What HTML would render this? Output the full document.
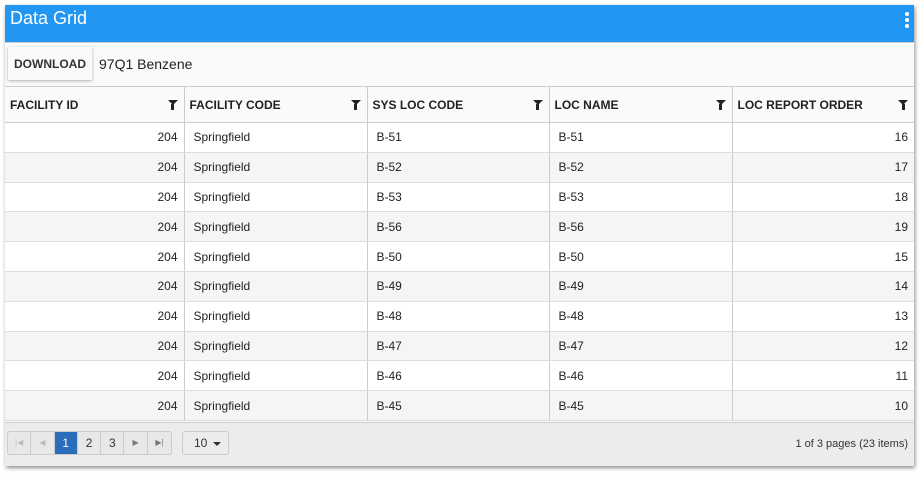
<!DOCTYPE html>
<html><head><style>
*{box-sizing:border-box;margin:0;padding:0}
body{width:924px;height:477px;background:#fff;font-family:"Liberation Sans",Arial,sans-serif;position:relative;overflow:hidden}
.panel{position:absolute;left:5px;top:5px;width:909px;height:461px;background:#fafafa;box-shadow:1px 2px 4px rgba(0,0,0,.45)}
.hdr{height:37px;background:#2196f3;color:#fff;font-size:18px;padding:3px 0 0 5px}
.dots{position:absolute;right:5px;top:7px;width:4px}
.dots i{display:block;width:4px;height:4px;border-radius:2px;background:#fff;margin-bottom:2px}
.tb{height:44px;border-top:1px solid #ccc;position:relative}
.btn{position:absolute;left:3px;top:4px;width:84px;height:33px;background:#fafafa;box-shadow:0 1px 3px rgba(0,0,0,.3);font-size:12px;font-weight:bold;color:#333;text-align:center;line-height:35px}
.tt{position:absolute;left:94px;top:13px;font-size:14px;color:#222}
table{border-collapse:collapse;width:909px;font-size:12px;color:#222;table-layout:fixed}
th{height:36px;text-align:left;font-weight:bold;padding-left:5px;border:1px solid #ccc;background:#fafafa;position:relative;color:#222}
th:first-child{border-left:none}th:last-child{border-right:none}
td{height:29.8px;border-left:1px solid #ccc;border-bottom:1px solid #ddd;padding:0 6px 0 9px;background:#fff}
td:first-child{border-left:none}
tr.g td{background:#f5f5f5}
.r{text-align:right}
.f{position:absolute;right:6px;top:13px;width:0;height:0;border-left:5px solid transparent;border-right:5px solid transparent;border-top:5px solid #222}
.f:after{content:"";position:absolute;left:-1.5px;top:-1px;width:3px;height:6px;background:#222}
.pg{position:absolute;left:0;top:417px;width:909px;height:44px;background:#ececec;border-top:1px solid #ccc}
.pager{position:absolute;left:2px;top:8px;display:flex;border:1px solid #ccc;border-radius:3px;height:24px;background:#e8e8e8}
.pager span{width:23.3px;text-align:center;line-height:22px;font-size:12px;color:#333;border-right:1px solid #ccc}
.pager span:last-child{border-right:none}
.pager .a{background:#2a6ebb;color:#fff}
.pager .d{color:#bbb;font-size:8px}
.pager .n{color:#777;font-size:8px}
.sel{position:absolute;left:177px;top:8px;width:47px;height:24px;border:1px solid #ccc;border-radius:3px;font-size:12px;line-height:22px;padding-left:11px;color:#333}
.sel:after{content:"";position:absolute;right:7px;top:10px;border-left:4px solid transparent;border-right:4px solid transparent;border-top:4px solid #333}
.info{position:absolute;right:6px;top:15px;font-size:11px;color:#333}
</style></head><body>
<div class="panel">
<div class="hdr">Data Grid</div>
<div class="dots"><i></i><i></i><i></i></div>
<div class="tb"><div class="btn">DOWNLOAD</div><div class="tt">97Q1 Benzene</div></div>
<table>
<colgroup><col style="width:179px"><col style="width:183px"><col style="width:182px"><col style="width:183px"><col style="width:182px"></colgroup>
<tr><th>FACILITY ID<span class="f"></span></th><th>FACILITY CODE<span class="f"></span></th><th>SYS LOC CODE<span class="f"></span></th><th>LOC NAME<span class="f"></span></th><th>LOC REPORT ORDER<span class="f"></span></th></tr>
<tr><td class="r">204</td><td>Springfield</td><td>B-51</td><td>B-51</td><td class="r">16</td></tr>
<tr class="g"><td class="r">204</td><td>Springfield</td><td>B-52</td><td>B-52</td><td class="r">17</td></tr>
<tr><td class="r">204</td><td>Springfield</td><td>B-53</td><td>B-53</td><td class="r">18</td></tr>
<tr class="g"><td class="r">204</td><td>Springfield</td><td>B-56</td><td>B-56</td><td class="r">19</td></tr>
<tr><td class="r">204</td><td>Springfield</td><td>B-50</td><td>B-50</td><td class="r">15</td></tr>
<tr class="g"><td class="r">204</td><td>Springfield</td><td>B-49</td><td>B-49</td><td class="r">14</td></tr>
<tr><td class="r">204</td><td>Springfield</td><td>B-48</td><td>B-48</td><td class="r">13</td></tr>
<tr class="g"><td class="r">204</td><td>Springfield</td><td>B-47</td><td>B-47</td><td class="r">12</td></tr>
<tr><td class="r">204</td><td>Springfield</td><td>B-46</td><td>B-46</td><td class="r">11</td></tr>
<tr class="g"><td class="r">204</td><td>Springfield</td><td>B-45</td><td>B-45</td><td class="r">10</td></tr>
</table>
<div class="pg">
<div class="pager"><span class="d">|◀</span><span class="d">◀</span><span class="a">1</span><span>2</span><span>3</span><span class="n">▶</span><span class="n">▶|</span></div>
<div class="sel">10</div>
<div class="info">1 of 3 pages (23 items)</div>
</div>
</div>
</body></html>
